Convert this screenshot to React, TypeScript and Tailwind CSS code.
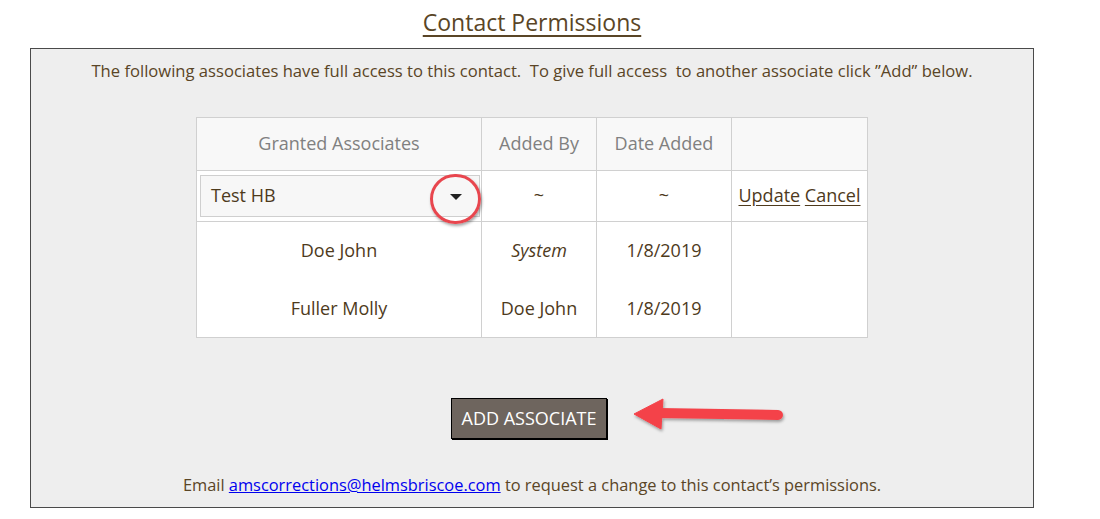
export default function App() {
  const font = { fontFamily: '"Open Sans", "Noto Sans", Arial, sans-serif' };
  const cell = "border-x border-[#d0d0d0] text-center";

  return (
    <div className="w-[1100px] h-[519px] bg-white text-[#5a4526]" style={font}>
      <div className="w-[1004px] ml-[30px]">
        <h1 className="h-[48px] flex items-center justify-center pb-[4px]">
          <span className="text-[23px] underline underline-offset-[4px] decoration-[1.5px]">
            Contact Permissions
          </span>
        </h1>

        <div className="h-[460px] border-[1.5px] border-[#4a4a4a] bg-[#eeeeee] flex flex-col items-center">
          <p className="mt-[10px] text-[16.6px] whitespace-pre">
            The following associates have full access to this contact.  To give full access  to another associate click ”Add” below.
          </p>

          <table className="mt-[33px] border-collapse text-[18px] text-[#4e3a1c]">
            <thead>
              <tr className="h-[53px] bg-[#f8f8f8] text-[#808080]">
                <th className={`${cell} border-t w-[285px] font-normal`}>Granted Associates</th>
                <th className={`${cell} border-t w-[115px] font-normal`}>Added By</th>
                <th className={`${cell} border-t w-[135px] font-normal`}>Date Added</th>
                <th className={`${cell} border-t w-[136px] font-normal`}></th>
              </tr>
            </thead>
            <tbody className="bg-white">
              <tr className="h-[51px] border-y border-[#d0d0d0]">
                <td className={`${cell} pl-[3px] pr-[1px]`}>
                  <div className="relative h-[42px] border border-[#cfcfcf] bg-[#f7f7f7] flex items-center pl-[10px] text-left">
                    Test HB
                    <span className="absolute right-[17px] top-[18px] w-0 h-0 border-x-[6px] border-x-transparent border-t-[6px] border-t-[#222]" />
                    <span className="absolute right-[-2px] top-[-2px] w-[51px] h-[50px] rounded-full border-[3px] border-[#e8464e] shadow-[1px_2px_3px_rgba(0,0,0,0.35)]" />
                  </div>
                </td>
                <td className={cell}>~</td>
                <td className={cell}>~</td>
                <td className={`${cell} whitespace-nowrap`}>
                  <a href="#" className="underline underline-offset-[3px]">Update</a>{" "}
                  <a href="#" className="underline underline-offset-[3px]">Cancel</a>
                </td>
              </tr>
              <tr className="h-[58px]">
                <td className={cell}>Doe John</td>
                <td className={`${cell} italic`}>System</td>
                <td className={cell}>1/8/2019</td>
                <td className={cell}></td>
              </tr>
              <tr className="h-[58px] border-b border-[#d0d0d0]">
                <td className={cell}>Fuller Molly</td>
                <td className={cell}>Doe John</td>
                <td className={cell}>1/8/2019</td>
                <td className={cell}></td>
              </tr>
            </tbody>
          </table>

          <div className="relative mt-[60px] mr-[6px]">
            <button className="h-[41px] px-[10px] bg-[#6e655e] text-white text-[18px] border border-black shadow-[1px_1px_0_#000]">
              ADD ASSOCIATE
            </button>
            {/* annotation arrow */}
            <svg
              className="absolute left-[180px] top-[-4px] overflow-visible"
              width="160"
              height="40"
              viewBox="0 0 160 40"
            >
              <defs>
                <filter id="sh" x="-20%" y="-50%" width="140%" height="200%">
                  <feDropShadow dx="1" dy="2" stdDeviation="1.5" floodColor="#000" floodOpacity="0.35" />
                </filter>
              </defs>
              <g filter="url(#sh)" fill="#f4434a" stroke="#f4434a">
                <line x1="28" y1="19" x2="147" y2="21" strokeWidth="10" strokeLinecap="round" />
                <polygon points="3,20 32,5 30,35" strokeWidth="1" strokeLinejoin="round" />
              </g>
            </svg>
          </div>

          <p className="mt-[34px] text-[16.4px]">
            Email{" "}
            <a href="#" className="text-[#0000ee] underline">amscorrections@helmsbriscoe.com</a>{" "}
            to request a change to this contact’s permissions.
          </p>
        </div>
      </div>
    </div>
  );
}
